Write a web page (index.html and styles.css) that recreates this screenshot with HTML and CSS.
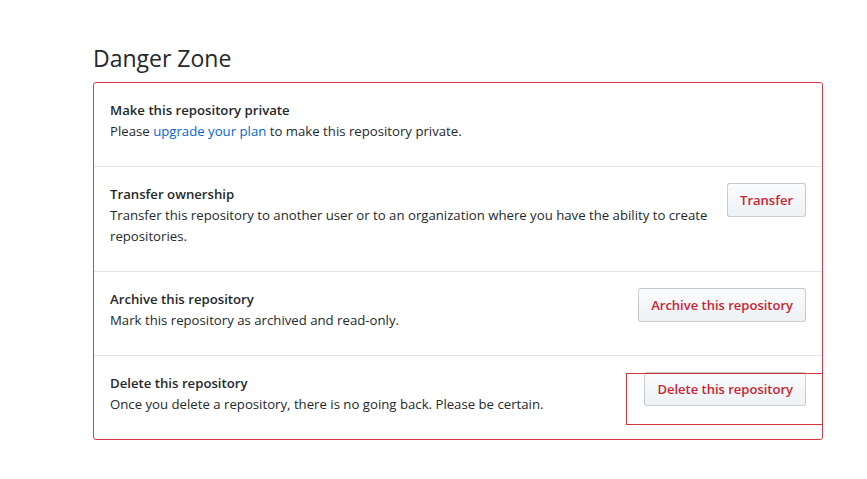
FILE: index.html
```html
<!DOCTYPE html>
<html>
<head>
<meta charset="utf-8">
<link rel="stylesheet" href="styles.css">
</head>
<body>
<div class="page">
  <h2 class="subhead">Danger Zone</h2>
  <div class="box">
    <div class="row">
      <div class="text">
        <div class="title">Make this repository private</div>
        <p>Please <a href="#">upgrade your plan</a> to make this repository private.</p>
      </div>
    </div>
    <div class="row">
      <div class="text">
        <div class="title">Transfer ownership</div>
        <p>Transfer this repository to another user or to an organization where you have the ability to create repositories.</p>
      </div>
      <button class="btn">Transfer</button>
    </div>
    <div class="row">
      <div class="text">
        <div class="title">Archive this repository</div>
        <p>Mark this repository as archived and read-only.</p>
      </div>
      <button class="btn">Archive this repository</button>
    </div>
    <div class="row">
      <div class="text">
        <div class="title">Delete this repository</div>
        <p>Once you delete a repository, there is no going back. Please be certain.</p>
      </div>
      <button class="btn">Delete this repository</button>
    </div>
  </div>
</div>
<div class="highlight"></div>
</body>
</html>
```
FILE: styles.css
```css
html, body {
  margin: 0;
  background: #fff;
}
body {
  font-family: "Open Sans", "Noto Sans", sans-serif;
  font-size: 13.2px;
  color: #24292e;
}
.page {
  padding: 40px 0 0 93px;
  width: 730px;
}
.subhead {
  font-size: 23px;
  font-weight: 400;
  line-height: 36px;
  margin: 0 0 6px;
  color: #24292e;
}
.box {
  border: 1px solid #d73a49;
  border-radius: 3px;
}
.row {
  display: flex;
  align-items: flex-start;
  justify-content: space-between;
  padding: 16px;
  border-top: 1px solid #e1e4e8;
}
.row:first-child {
  border-top: 0;
}
.text {
  flex: 1;
  margin-right: 16px;
  line-height: 21px;
  padding-top: 1px;
  margin-bottom: -1px;
}
.title {
  font-weight: 600;
}
.text p {
  margin: 0 0 9px;
}
.text a {
  color: #0366d6;
  text-decoration: none;
}
.btn {
  font-family: inherit;
  font-size: 13px;
  font-weight: 600;
  line-height: 20px;
  padding: 6px 12px;
  color: #cb2431;
  background: linear-gradient(180deg, #fafbfc, #eff3f6 90%);
  border: 1px solid rgba(27, 31, 35, 0.2);
  border-radius: 3px;
  white-space: nowrap;
  flex: none;
}
.highlight {
  position: absolute;
  left: 626px;
  top: 373px;
  width: 195px;
  height: 50px;
  border: 1px solid #d6343d;
}
```
